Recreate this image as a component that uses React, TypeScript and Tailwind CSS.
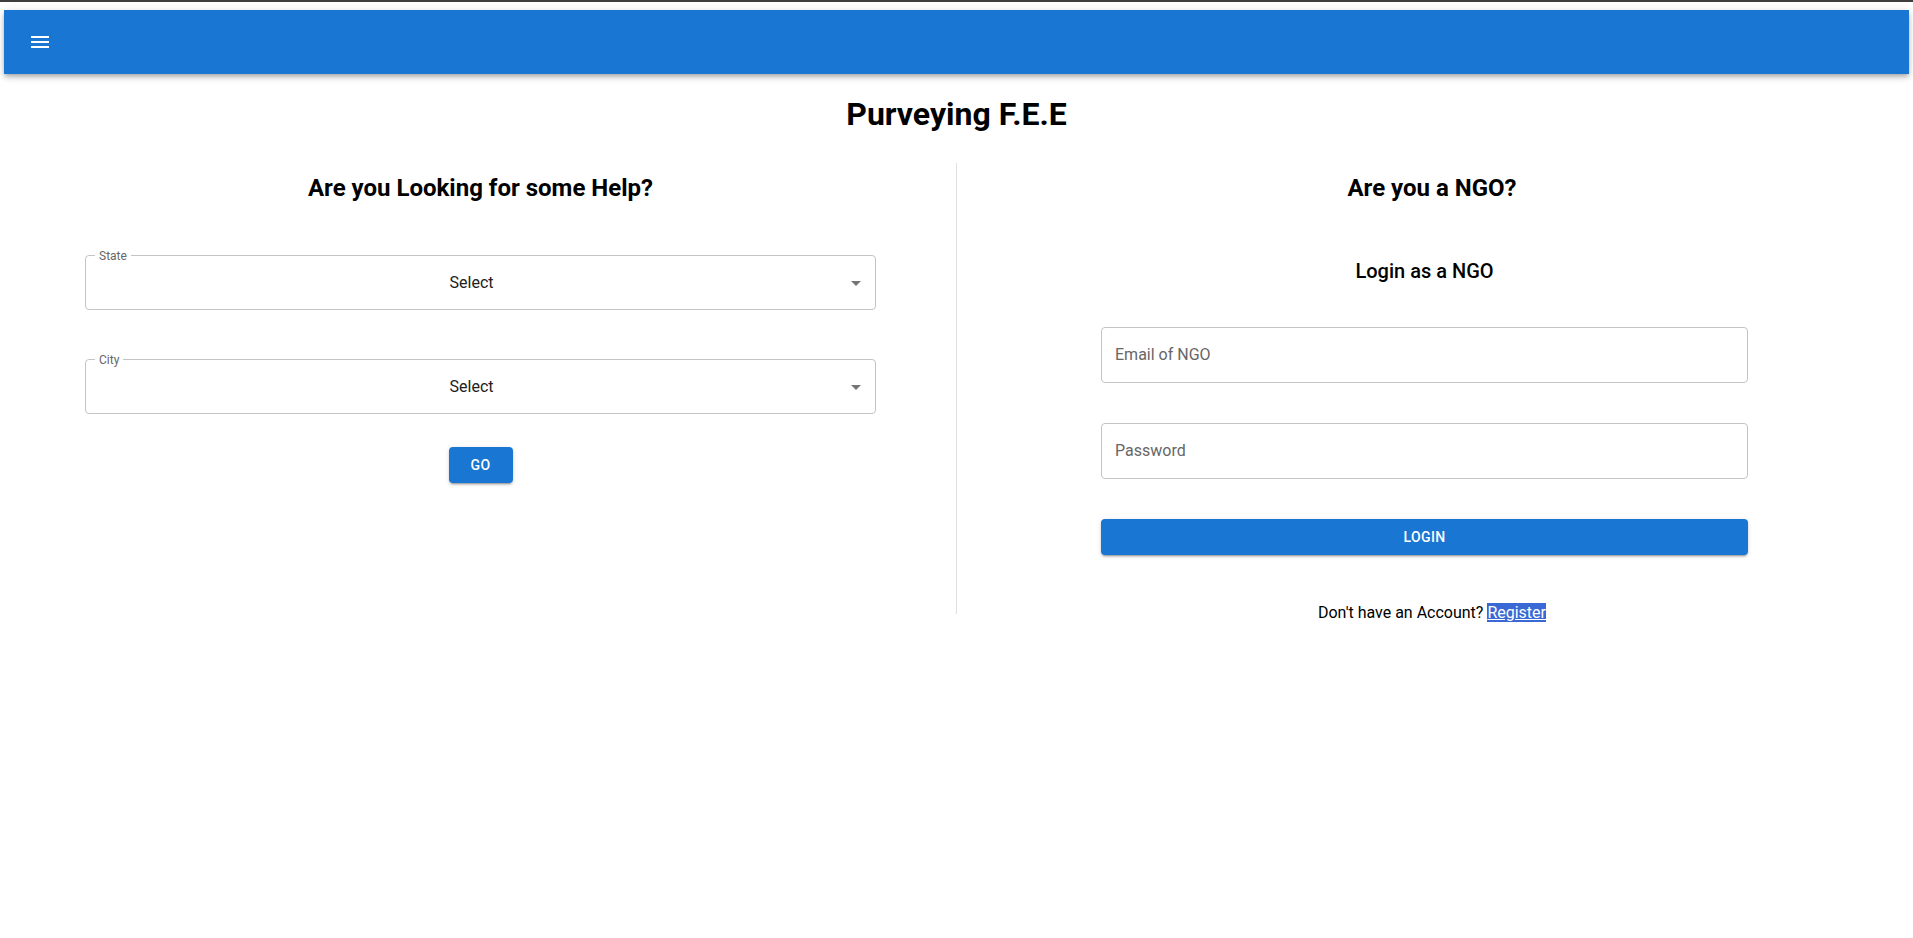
import React from "react";

const font = { fontFamily: "Roboto, 'Noto Sans', Arial, sans-serif" };

function MenuIcon() {
  return (
    <svg width="24" height="24" viewBox="0 0 24 24" fill="white">
      <path d="M3 18h18v-2H3v2zm0-5h18v-2H3v2zm0-7v2h18V6H3z" />
    </svg>
  );
}

function SelectBox({ label }: { label: string }) {
  return (
    <div className="relative h-[55px] rounded-[4px] border border-[#c4c4c4] flex items-center">
      <span className="absolute left-[9px] top-[-8px] px-[4px] bg-white text-[12px] leading-[16px] text-[#666]">
        {label}
      </span>
      <div className="flex-1 pl-[14px] pr-[32px] text-center text-[16px] leading-[23px] text-[#212121]">
        Select
      </div>
      <svg
        className="absolute right-[7px] top-1/2 -translate-y-1/2"
        width="24"
        height="24"
        viewBox="0 0 24 24"
        fill="rgba(0,0,0,0.54)"
      >
        <path d="M7 10l5 5 5-5z" />
      </svg>
    </div>
  );
}

function TextInput({ placeholder }: { placeholder: string }) {
  return (
    <div className="h-[56px] rounded-[4px] border border-[#c4c4c4] flex items-center px-[13px] pb-[2px]">
      <span className="text-[16px] leading-[23px] text-[#666]">{placeholder}</span>
    </div>
  );
}

export default function App() {
  return (
    <div className="min-h-screen bg-white text-[#212121]" style={font}>
      <div className="h-[2px] bg-[#3d3d3d]" />
      <div className="px-[4px] pt-[8px]">
        <div className="h-[64px] bg-[#1976d2] flex items-center pl-[24px] shadow-[0px_2px_4px_-1px_rgba(0,0,0,0.2),0px_4px_5px_0px_rgba(0,0,0,0.14),0px_1px_10px_0px_rgba(0,0,0,0.12)]">
          <MenuIcon />
        </div>
      </div>

      <h1 className="mt-[20px] text-center text-[32px] leading-[40px] font-bold text-black">
        Purveying F.E.E
      </h1>

      <div className="mt-[29px] flex">
        <div className="w-[956px] pl-[85px] pr-[80px] pt-[9px]">
          <h2 className="text-center text-[24px] leading-[32px] font-bold text-black">
            Are you Looking for some Help?
          </h2>
          <div className="mt-[51px]">
            <SelectBox label="State" />
          </div>
          <div className="mt-[49px]">
            <SelectBox label="City" />
          </div>
          <div className="mt-[33px] flex justify-center">
            <button className="h-[36px] min-w-[64px] px-[16px] rounded-[4px] bg-[#1976d2] text-white text-[14px] font-medium uppercase tracking-[0.4px] shadow-[0px_3px_1px_-2px_rgba(0,0,0,0.2),0px_2px_2px_0px_rgba(0,0,0,0.14),0px_1px_5px_0px_rgba(0,0,0,0.12)]">
              GO
            </button>
          </div>
        </div>

        <div className="w-px h-[451px] bg-[#e0e0e0]" />

        <div className="flex-1 pr-[6px] pt-[9px]">
          <h2 className="text-center text-[24px] leading-[32px] font-bold text-black">
            Are you a NGO?
          </h2>
          <div className="ml-[144px] w-[647px]">
            <h3 className="mt-[51px] text-center text-[20px] leading-[32px] font-medium text-black">
              Login as a NGO
            </h3>
            <div className="mt-[40px]">
              <TextInput placeholder="Email of NGO" />
            </div>
            <div className="mt-[40px]">
              <TextInput placeholder="Password" />
            </div>
            <button className="mt-[40px] w-full h-[36px] rounded-[4px] bg-[#1976d2] text-white text-[14px] font-medium uppercase tracking-[0.4px] shadow-[0px_3px_1px_-2px_rgba(0,0,0,0.2),0px_2px_2px_0px_rgba(0,0,0,0.14),0px_1px_5px_0px_rgba(0,0,0,0.12)]">
              LOGIN
            </button>
          </div>
          <p className="mt-[46px] text-center text-[16px] leading-[24px] text-black">
            Don't have an Account?{" "}
            <span className="bg-[#3a68d4] text-white underline">Register</span>
          </p>
        </div>
      </div>
    </div>
  );
}
